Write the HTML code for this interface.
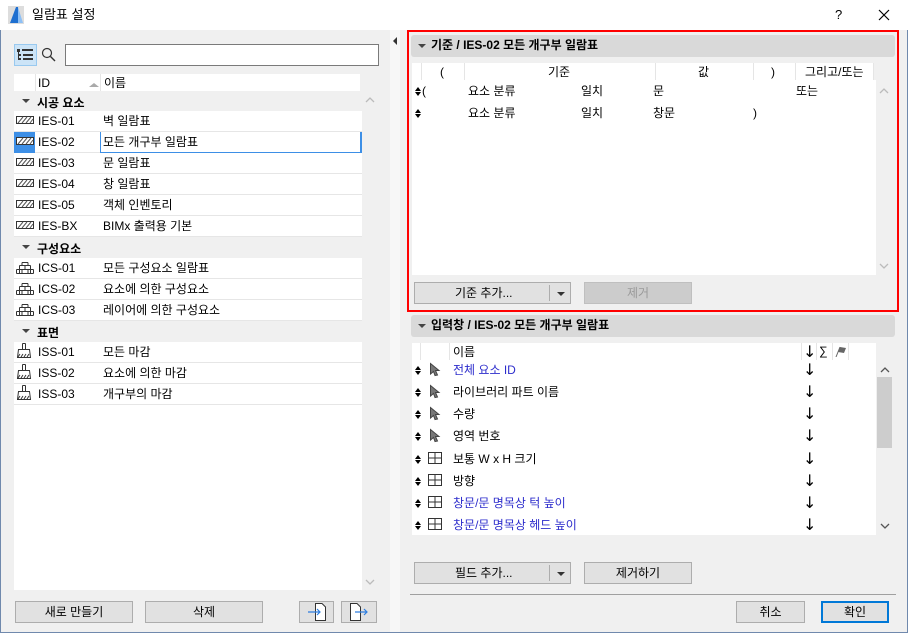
<!DOCTYPE html>
<html><head><meta charset="utf-8"><style>
*{box-sizing:border-box;margin:0;padding:0}
body{width:908px;height:633px;position:relative;overflow:hidden;background:#f0f0f0;font-family:"Liberation Sans","Noto Sans CJK KR",sans-serif;font-size:12px;color:#000}
.a{position:absolute}
.win{left:0;top:0;width:908px;height:633px;border:1px solid #7089ad;border-top:none}
.t{white-space:nowrap;line-height:1}
.btn{position:absolute;background:#e1e1e1;border:1px solid #adadad;text-align:center;line-height:20px;font-size:12px}
.hdrbar{position:absolute;background:#d9d9d9;border-radius:3px;font-weight:bold;line-height:21px;padding-left:20px}
.hdrbar:before{content:"";position:absolute;left:7px;top:9px;border-left:4px solid transparent;border-right:4px solid transparent;border-top:4px solid #444}
.row{position:absolute;left:14px;width:348px;height:21px;border-bottom:1px solid #e6e6e6;background:#fff}
.grp{position:absolute;left:14px;width:348px;height:21px;background:#f0f0f0;font-weight:bold}
.grp span{position:absolute;left:23px;top:3px}
.grp:before{content:"";position:absolute;left:8px;top:8px;border-left:4px solid transparent;border-right:4px solid transparent;border-top:4px solid #444}
.row .id{position:absolute;left:24px;top:4px}
.row .nm{position:absolute;left:89px;top:4px}
.row svg{position:absolute;left:2px;top:4px}
.blue{color:#2d2dcc}
.ud{position:absolute;width:7px;height:10px}
.ud:before{content:"";position:absolute;left:0;top:0;border-left:3.5px solid transparent;border-right:3.5px solid transparent;border-bottom:4px solid #000}
.ud:after{content:"";position:absolute;left:0;top:5px;border-left:3.5px solid transparent;border-right:3.5px solid transparent;border-top:4px solid #000}
.dn{position:absolute;font-size:16px;line-height:1;font-family:"DejaVu Sans",sans-serif}
</style></head><body>
<div class="a win"></div>
<div class="a" style="left:0;top:0;width:908px;height:30px;background:#fff"></div>
<svg class="a" style="left:8px;top:6px" width="16" height="18" viewBox="0 0 16 18"><rect width="16" height="18" fill="#ddd"/><path d="M2 17 L8 1 L10 1 L10 17Z" fill="#1e6fd0"/><path d="M10 1 L15 17 L10 17Z" fill="#8ec0f5"/></svg>
<div class="a t" style="left:32px;top:8px;font-size:13px">일람표 설정</div>
<div class="a t" style="left:835px;top:8px;font-size:13px">?</div>
<svg class="a" style="left:878px;top:9px" width="12" height="12"><path d="M1 1L11 11M11 1L1 11" stroke="#000" stroke-width="1.2"/></svg>

<div class="a" style="left:390px;top:30px;width:10px;height:602px;background:#f7f7f7"></div>
<div class="a" style="left:393px;top:37px;border-top:4px solid transparent;border-bottom:4px solid transparent;border-right:4px solid #333"></div>

<div class="a" style="left:14px;top:44px;width:23px;height:22px;background:#cce4f7;border:1px solid #99c9ef"></div>
<svg class="a" style="left:17px;top:48px" width="18" height="14"><g fill="#333"><rect x="0" y="1" width="3" height="3"/><rect x="5" y="1" width="11" height="2"/><rect x="2" y="6" width="2" height="2"/><rect x="6" y="6" width="10" height="2"/><rect x="2" y="10" width="2" height="2"/><rect x="6" y="10" width="10" height="2"/><rect x="1" y="4" width="1" height="8"/></g></svg>
<svg class="a" style="left:41px;top:47px" width="16" height="16"><circle cx="6" cy="6" r="4.5" fill="none" stroke="#333" stroke-width="1.2"/><path d="M9.5 9.5L14 14" stroke="#333" stroke-width="1.4"/></svg>
<div class="a" style="left:65px;top:44px;width:314px;height:22px;background:#fff;border:1px solid #7a7a7a"></div>

<div class="a" style="left:14px;top:74px;width:346px;height:17px;background:#fff"></div>
<div class="a" style="left:35px;top:74px;width:1px;height:17px;background:#e5e5e5"></div>
<div class="a" style="left:100px;top:74px;width:1px;height:17px;background:#e5e5e5"></div>
<div class="a t" style="left:38px;top:77px">ID</div>
<div class="a" style="left:89px;top:83px;border-left:5px solid transparent;border-right:5px solid transparent;border-bottom:4px solid #aaa"></div>
<div class="a t" style="left:104px;top:77px">이름</div>
<div class="a" style="left:14px;top:91px;width:348px;height:499px;background:#fff"></div>
<svg class="a" style="left:365px;top:96px" width="10" height="8"><path d="M1 6L5 2L9 6" fill="none" stroke="#bbb" stroke-width="1.3"/></svg>
<svg class="a" style="left:365px;top:578px" width="10" height="8"><path d="M1 2L5 6L9 2" fill="none" stroke="#bbb" stroke-width="1.3"/></svg>

<div class="grp" style="top:91px"><span>시공 요소</span></div>
<div class="row" style="top:111px"><svg width="18" height="10"><rect x="0.5" y="1.5" width="17" height="7" fill="#fff" stroke="#333"/><path d="M2 8L7 2M6 8L11 2M10 8L15 2M14 8L17 4" stroke="#555"/></svg><span class="id t">IES-01</span><span class="nm t">벽 일람표</span></div>
<div class="row" style="top:132px"><div class="a" style="left:0;top:0;width:21px;height:21px;background:#3d8fe6"></div><div class="a" style="left:86px;top:0;width:262px;height:21px;border-left:1px solid #3d8fe6;border-bottom:1px solid #3d8fe6;border-right:2px solid #3d8fe6"></div><svg width="18" height="10"><rect x="0.5" y="1.5" width="17" height="7" fill="#fff" stroke="#333"/><path d="M2 8L7 2M6 8L11 2M10 8L15 2M14 8L17 4" stroke="#555"/></svg><span class="id t">IES-02</span><span class="nm t">모든 개구부 일람표</span></div>
<div class="row" style="top:153px"><svg width="18" height="10"><rect x="0.5" y="1.5" width="17" height="7" fill="#fff" stroke="#333"/><path d="M2 8L7 2M6 8L11 2M10 8L15 2M14 8L17 4" stroke="#555"/></svg><span class="id t">IES-03</span><span class="nm t">문 일람표</span></div>
<div class="row" style="top:174px"><svg width="18" height="10"><rect x="0.5" y="1.5" width="17" height="7" fill="#fff" stroke="#333"/><path d="M2 8L7 2M6 8L11 2M10 8L15 2M14 8L17 4" stroke="#555"/></svg><span class="id t">IES-04</span><span class="nm t">창 일람표</span></div>
<div class="row" style="top:195px"><svg width="18" height="10"><rect x="0.5" y="1.5" width="17" height="7" fill="#fff" stroke="#333"/><path d="M2 8L7 2M6 8L11 2M10 8L15 2M14 8L17 4" stroke="#555"/></svg><span class="id t">IES-05</span><span class="nm t">객체 인벤토리</span></div>
<div class="row" style="top:216px"><svg width="18" height="10"><rect x="0.5" y="1.5" width="17" height="7" fill="#fff" stroke="#333"/><path d="M2 8L7 2M6 8L11 2M10 8L15 2M14 8L17 4" stroke="#555"/></svg><span class="id t">IES-BX</span><span class="nm t">BIMx 출력용 기본</span></div>
<div class="grp" style="top:237px"><span>구성요소</span></div>
<div class="row" style="top:258px"><svg width="18" height="12"><path d="M0.5 11.5H17.5M0.5 7.5H17.5M3.5 3.5H14.5M3.5 3.5V11.5M14.5 3.5V11.5M9 3.5V7.5M6 7.5V11.5M12 7.5V11.5M0.5 7.5V11.5M17.5 7.5V11.5M6 0.5H12M6 .5V3.5M12 .5V3.5" fill="none" stroke="#333"/></svg><span class="id t">ICS-01</span><span class="nm t">모든 구성요소 일람표</span></div>
<div class="row" style="top:279px"><svg width="18" height="12"><path d="M0.5 11.5H17.5M0.5 7.5H17.5M3.5 3.5H14.5M3.5 3.5V11.5M14.5 3.5V11.5M9 3.5V7.5M6 7.5V11.5M12 7.5V11.5M0.5 7.5V11.5M17.5 7.5V11.5M6 0.5H12M6 .5V3.5M12 .5V3.5" fill="none" stroke="#333"/></svg><span class="id t">ICS-02</span><span class="nm t">요소에 의한 구성요소</span></div>
<div class="row" style="top:300px"><svg width="18" height="12"><path d="M0.5 11.5H17.5M0.5 7.5H17.5M3.5 3.5H14.5M3.5 3.5V11.5M14.5 3.5V11.5M9 3.5V7.5M6 7.5V11.5M12 7.5V11.5M0.5 7.5V11.5M17.5 7.5V11.5M6 0.5H12M6 .5V3.5M12 .5V3.5" fill="none" stroke="#333"/></svg><span class="id t">ICS-03</span><span class="nm t">레이어에 의한 구성요소</span></div>
<div class="grp" style="top:321px"><span>표면</span></div>
<div class="row" style="top:342px"><svg width="16" height="16" style="top:1px"><path d="M6.5 0.5V6.5M9.5 0.5V6.5M6.5 .5H9.5M2.5 6.5H13.5L14.5 14.5H1.5Z" fill="#fff" stroke="#333"/><path d="M2 14L4 11M5 14L7 11M8 14L10 11M11 14L13 11" stroke="#333"/></svg><span class="id t">ISS-01</span><span class="nm t">모든 마감</span></div>
<div class="row" style="top:363px"><svg width="16" height="16" style="top:1px"><path d="M6.5 0.5V6.5M9.5 0.5V6.5M6.5 .5H9.5M2.5 6.5H13.5L14.5 14.5H1.5Z" fill="#fff" stroke="#333"/><path d="M2 14L4 11M5 14L7 11M8 14L10 11M11 14L13 11" stroke="#333"/></svg><span class="id t">ISS-02</span><span class="nm t">요소에 의한 마감</span></div>
<div class="row" style="top:384px"><svg width="16" height="16" style="top:1px"><path d="M6.5 0.5V6.5M9.5 0.5V6.5M6.5 .5H9.5M2.5 6.5H13.5L14.5 14.5H1.5Z" fill="#fff" stroke="#333"/><path d="M2 14L4 11M5 14L7 11M8 14L10 11M11 14L13 11" stroke="#333"/></svg><span class="id t">ISS-03</span><span class="nm t">개구부의 마감</span></div>

<div class="btn" style="left:15px;top:601px;width:118px;height:22px">새로 만들기</div>
<div class="btn" style="left:145px;top:601px;width:118px;height:22px">삭제</div>
<div class="btn" style="left:299px;top:601px;width:35px;height:22px"></div>
<div class="btn" style="left:341px;top:601px;width:36px;height:22px"></div>
<svg class="a" style="left:306px;top:603px" width="24" height="18"><path d="M9.5 .5H16L19.5 4V17.5H9.5Z" fill="#fff" stroke="#333"/><path d="M2 9H14M11 6L14 9L11 12" fill="none" stroke="#2d7ee0" stroke-width="1.2"/></svg>
<svg class="a" style="left:348px;top:603px" width="24" height="18"><path d="M2.5 .5H9L12.5 4V17.5H2.5Z" fill="#fff" stroke="#333"/><path d="M7 9H19M16 6L19 9L16 12" fill="none" stroke="#2d7ee0" stroke-width="1.2"/></svg>

<div class="a" style="left:407px;top:30px;width:492px;height:282px;border:2px solid #f00"></div>
<div class="hdrbar" style="left:411px;top:35px;width:484px;height:22px">기준 / IES-02 모든 개구부 일람표</div>
<div class="a" style="left:412px;top:63px;width:461px;height:17px;background:#fff"></div>
<div class="a" style="left:421px;top:63px;width:1px;height:17px;background:#e5e5e5"></div>
<div class="a" style="left:464px;top:63px;width:1px;height:17px;background:#e5e5e5"></div>
<div class="a" style="left:655px;top:63px;width:1px;height:17px;background:#e5e5e5"></div>
<div class="a" style="left:753px;top:63px;width:1px;height:17px;background:#e5e5e5"></div>
<div class="a" style="left:795px;top:63px;width:1px;height:17px;background:#e5e5e5"></div>
<div class="a" style="left:873px;top:63px;width:1px;height:17px;background:#e5e5e5"></div>
<div class="a t" style="left:440px;top:66px">(</div>
<div class="a t" style="left:548px;top:66px">기준</div>
<div class="a t" style="left:698px;top:66px">값</div>
<div class="a t" style="left:771px;top:66px">)</div>
<div class="a t" style="left:805px;top:66px">그리고/또는</div>
<div class="a" style="left:412px;top:80px;width:464px;height:195px;background:#fff"></div>
<svg class="a" style="left:879px;top:87px" width="10" height="8"><path d="M1 6L5 2L9 6" fill="none" stroke="#bbb" stroke-width="1.3"/></svg>
<svg class="a" style="left:879px;top:262px" width="10" height="8"><path d="M1 2L5 6L9 2" fill="none" stroke="#bbb" stroke-width="1.3"/></svg>
<div class="ud" style="left:415px;top:87px"></div><div class="a t" style="left:422px;top:85px">(</div>
<div class="a t" style="left:468px;top:85px">요소 분류</div>
<div class="a t" style="left:581px;top:85px">일치</div>
<div class="a t" style="left:653px;top:85px">문</div>
<div class="a t" style="left:796px;top:85px">또는</div>
<div class="ud" style="left:415px;top:109px"></div>
<div class="a t" style="left:468px;top:107px">요소 분류</div>
<div class="a t" style="left:581px;top:107px">일치</div>
<div class="a t" style="left:653px;top:107px">창문</div>
<div class="a t" style="left:753px;top:107px">)</div>
<div class="btn" style="left:414px;top:282px;width:157px;height:22px;text-align:left;padding-left:40px">기준 추가...</div>
<div class="a" style="left:549px;top:285px;width:1px;height:16px;background:#adadad"></div>
<div class="a" style="left:557px;top:292px;border-left:4px solid transparent;border-right:4px solid transparent;border-top:4px solid #333"></div>
<div class="btn" style="left:584px;top:282px;width:108px;height:22px;background:#cccccc;border-color:#bfbfbf;color:#9a9a9a">제거</div>

<div class="hdrbar" style="left:411px;top:315px;width:484px;height:22px">입력창 / IES-02 모든 개구부 일람표</div>
<div class="a" style="left:412px;top:343px;width:464px;height:17px;background:#fff"></div>
<div class="a" style="left:420px;top:343px;width:1px;height:17px;background:#e5e5e5"></div>
<div class="a" style="left:449px;top:343px;width:1px;height:17px;background:#e5e5e5"></div>
<div class="a" style="left:801px;top:343px;width:1px;height:17px;background:#e5e5e5"></div>
<div class="a" style="left:816px;top:343px;width:1px;height:17px;background:#e5e5e5"></div>
<div class="a" style="left:832px;top:343px;width:1px;height:17px;background:#e5e5e5"></div>
<div class="a" style="left:848px;top:343px;width:1px;height:17px;background:#e5e5e5"></div>
<div class="a t" style="left:453px;top:346px">이름</div>
<div class="dn" style="left:803px;top:344px">↓</div>
<div class="a t" style="left:819px;top:345px">∑</div>
<svg class="a" style="left:835px;top:345px" width="12" height="12"><path d="M1 12L5 2" stroke="#666"/><path d="M5 2L11 3L9 8L3 7Z" fill="#666"/></svg>
<div class="a" style="left:412px;top:360px;width:464px;height:175px;background:#fff"></div>
<div class="a" style="left:877px;top:377px;width:15px;height:71px;background:#cdcdcd"></div>
<svg class="a" style="left:880px;top:366px" width="10" height="8"><path d="M1 6L5 2L9 6" fill="none" stroke="#555" stroke-width="1.3"/></svg>
<svg class="a" style="left:880px;top:522px" width="10" height="8"><path d="M1 2L5 6L9 2" fill="none" stroke="#555" stroke-width="1.3"/></svg>

<div class="ud" style="left:415px;top:366px"></div><svg class="a" style="left:429px;top:362px" width="12" height="15"><path d="M1.5 1.5L10 8.5L6.5 8.5L8.5 13L6 13.5L4.5 9.5L1.5 12Z" fill="#777" stroke="#444"/></svg><div class="a t blue" style="left:453px;top:364px">전체 요소 ID</div><div class="dn" style="left:803px;top:362px">↓</div>
<div class="ud" style="left:415px;top:388px"></div><svg class="a" style="left:429px;top:384px" width="12" height="15"><path d="M1.5 1.5L10 8.5L6.5 8.5L8.5 13L6 13.5L4.5 9.5L1.5 12Z" fill="#777" stroke="#444"/></svg><div class="a t" style="left:453px;top:386px">라이브러리 파트 이름</div><div class="dn" style="left:803px;top:384px">↓</div>
<div class="ud" style="left:415px;top:410px"></div><svg class="a" style="left:429px;top:406px" width="12" height="15"><path d="M1.5 1.5L10 8.5L6.5 8.5L8.5 13L6 13.5L4.5 9.5L1.5 12Z" fill="#777" stroke="#444"/></svg><div class="a t" style="left:453px;top:408px">수량</div><div class="dn" style="left:803px;top:406px">↓</div>
<div class="ud" style="left:415px;top:432px"></div><svg class="a" style="left:429px;top:428px" width="12" height="15"><path d="M1.5 1.5L10 8.5L6.5 8.5L8.5 13L6 13.5L4.5 9.5L1.5 12Z" fill="#777" stroke="#444"/></svg><div class="a t" style="left:453px;top:430px">영역 번호</div><div class="dn" style="left:803px;top:428px">↓</div>
<div class="ud" style="left:415px;top:455px"></div><svg class="a" style="left:427px;top:451px" width="16" height="14"><path d="M1.5 1.5H14.5V12.5H1.5Z M8 1.5V12.5 M1.5 7H14.5" fill="none" stroke="#333"/></svg><div class="a t" style="left:453px;top:453px">보통 W x H 크기</div><div class="dn" style="left:803px;top:451px">↓</div>
<div class="ud" style="left:415px;top:477px"></div><svg class="a" style="left:427px;top:473px" width="16" height="14"><path d="M1.5 1.5H14.5V12.5H1.5Z M8 1.5V12.5 M1.5 7H14.5" fill="none" stroke="#333"/></svg><div class="a t" style="left:453px;top:475px">방향</div><div class="dn" style="left:803px;top:473px">↓</div>
<div class="ud" style="left:415px;top:499px"></div><svg class="a" style="left:427px;top:495px" width="16" height="14"><path d="M1.5 1.5H14.5V12.5H1.5Z M8 1.5V12.5 M1.5 7H14.5" fill="none" stroke="#333"/></svg><div class="a t blue" style="left:453px;top:497px">창문/문 명목상 턱 높이</div><div class="dn" style="left:803px;top:495px">↓</div>
<div class="ud" style="left:415px;top:521px"></div><svg class="a" style="left:427px;top:517px" width="16" height="14"><path d="M1.5 1.5H14.5V12.5H1.5Z M8 1.5V12.5 M1.5 7H14.5" fill="none" stroke="#333"/></svg><div class="a t blue" style="left:453px;top:519px">창문/문 명목상 헤드 높이</div><div class="dn" style="left:803px;top:517px">↓</div>

<div class="btn" style="left:414px;top:562px;width:157px;height:22px;text-align:left;padding-left:40px">필드 추가...</div>
<div class="a" style="left:549px;top:565px;width:1px;height:16px;background:#adadad"></div>
<div class="a" style="left:557px;top:572px;border-left:4px solid transparent;border-right:4px solid transparent;border-top:4px solid #333"></div>
<div class="btn" style="left:584px;top:562px;width:108px;height:22px">제거하기</div>

<div class="a" style="left:410px;top:594px;width:486px;height:1px;background:#a0a0a0"></div>
<div class="btn" style="left:736px;top:601px;width:69px;height:22px">취소</div>
<div class="btn" style="left:821px;top:601px;width:68px;height:22px;border:2px solid #0078d7;line-height:18px">확인</div>
</body></html>
